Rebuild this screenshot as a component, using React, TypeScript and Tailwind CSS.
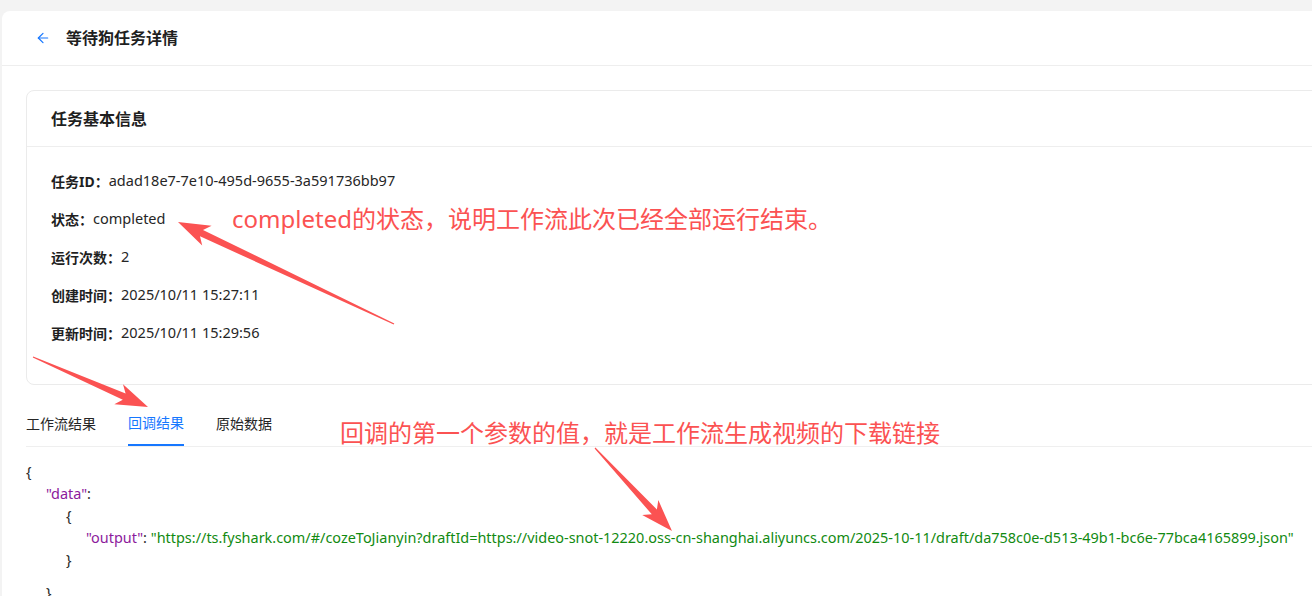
import { ArrowLeft } from "lucide-react";

type Pt = [number, number];

// 标注用的红色箭头（尾细头粗）
function arrowPoints(tail: Pt, tip: Pt) {
  const dx = tip[0] - tail[0];
  const dy = tip[1] - tail[1];
  const len = Math.hypot(dx, dy);
  const ux = dx / len;
  const uy = dy / len;
  const nx = -uy;
  const ny = ux;
  const headLen = 30;
  const hx = tip[0] - ux * headLen;
  const hy = tip[1] - uy * headLen;
  const pts: Pt[] = [
    [tail[0] + nx * 0.6, tail[1] + ny * 0.6],
    [hx + nx * 3.5 + ux * 4, hy + ny * 3.5 + uy * 4],
    [hx + nx * 11 - ux * 2, hy + ny * 11 - uy * 2],
    tip,
    [hx - nx * 11 - ux * 2, hy - ny * 11 - uy * 2],
    [hx - nx * 3.5 + ux * 4, hy - ny * 3.5 + uy * 4],
    [tail[0] - nx * 0.6, tail[1] - ny * 0.6],
  ];
  return pts.map((p) => `${p[0].toFixed(1)},${p[1].toFixed(1)}`).join(" ");
}

const arrows: { tail: Pt; tip: Pt }[] = [
  { tail: [394, 324], tip: [178, 222] },
  { tail: [33, 357], tip: [148, 407] },
  { tail: [595, 448], tip: [672, 531] },
];

export default function App() {
  const infoRows = [
    { label: "任务ID：", value: "adad18e7-7e10-495d-9655-3a591736bb97" },
    { label: "状态：", value: "completed" },
    { label: "运行次数：", value: "2" },
    { label: "创建时间：", value: "2025/10/11 15:27:11" },
    { label: "更新时间：", value: "2025/10/11 15:29:56" },
  ];
  const tabs = ["工作流结果", "回调结果", "原始数据"];
  const url =
    "https://ts.fyshark.com/#/cozeToJianyin?draftId=https://video-snot-12220.oss-cn-shanghai.aliyuncs.com/2025-10-11/draft/da758c0e-d513-49b1-bc6e-77bca4165899.json";

  return (
    <div
      className="relative w-[1312px] h-[596px] overflow-hidden bg-[#f3f3f3] pl-[2px] pt-[11px] text-[#262626]"
      style={{ fontFamily: '"Noto Sans", "Noto Sans CJK SC", sans-serif' }}
    >
      <div className="w-[1340px] h-[620px] bg-white rounded-tl-lg">
        {/* 顶部标题 */}
        <div className="h-[55px] flex items-center pl-[33px] border-b border-[#eeeeee]">
          <ArrowLeft className="w-4 h-4 text-[#1677ff]" strokeWidth={1.8} />
          <h1 className="ml-[15px] text-[16px] font-bold text-[#1f1f1f]">等待狗任务详情</h1>
        </div>

        <div className="pl-[24px] pt-[24px]">
          {/* 任务基本信息 */}
          <div className="border border-[#ebebeb] rounded-lg">
            <div className="h-[56px] flex items-center px-[24px] border-b border-[#eeeeee]">
              <h2 className="text-[16px] font-bold text-[#1f1f1f]">任务基本信息</h2>
            </div>
            <div className="px-[24px] pt-[23px] pb-[24px]">
              {infoRows.map((r) => (
                <div key={r.label} className="flex items-center h-[22px] mb-[16px]">
                  <span className="text-[14px] font-bold text-[#1f1f1f]">{r.label}</span>
                  <span className="text-[14.5px] text-[#262626]">{r.value}</span>
                </div>
              ))}
            </div>
          </div>

          {/* 标签页 */}
          <div className="mt-[15px] flex gap-[32px] border-b border-[#efefef] h-[47px]">
            {tabs.map((t, i) => (
              <div
                key={t}
                className={`flex items-center text-[14px] ${
                  i === 1 ? "text-[#1677ff] border-b-2 border-[#1677ff]" : "text-[#262626]"
                }`}
              >
                {t}
              </div>
            ))}
          </div>

          {/* JSON 内容 */}
          <div className="pt-[14px] text-[14.45px] leading-[22px] whitespace-nowrap">
            <div>{"{"}</div>
            <div className="pl-[20px]">
              <span className="text-[#8c1a9c]">"data"</span>:
            </div>
            <div className="pl-[40px]">{"{"}</div>
            <div className="pl-[60px]">
              <span className="text-[#8c1a9c]">"output"</span>:{" "}
              <span className="text-[#118a11]">"{url}"</span>
            </div>
            <div className="pl-[40px]">{"}"}</div>
            <div className="pl-[20px] mt-[11px]">{"}"}</div>
          </div>
        </div>
      </div>

      {/* 红色标注文字 */}
      <div className="absolute left-[232px] top-[203px] text-[24px] leading-[32px] text-[#fb5252]">
        completed的状态，说明工作流此次已经全部运行结束。
      </div>
      <div className="absolute left-[340px] top-[417px] text-[24px] leading-[32px] text-[#fb5252]">
        回调的第一个参数的值，就是工作流生成视频的下载链接
      </div>

      {/* 红色标注箭头 */}
      <svg className="absolute inset-0 pointer-events-none" width="1312" height="596">
        {arrows.map((a, i) => (
          <polygon key={i} points={arrowPoints(a.tail, a.tip)} fill="#fb5252" />
        ))}
      </svg>
    </div>
  );
}
